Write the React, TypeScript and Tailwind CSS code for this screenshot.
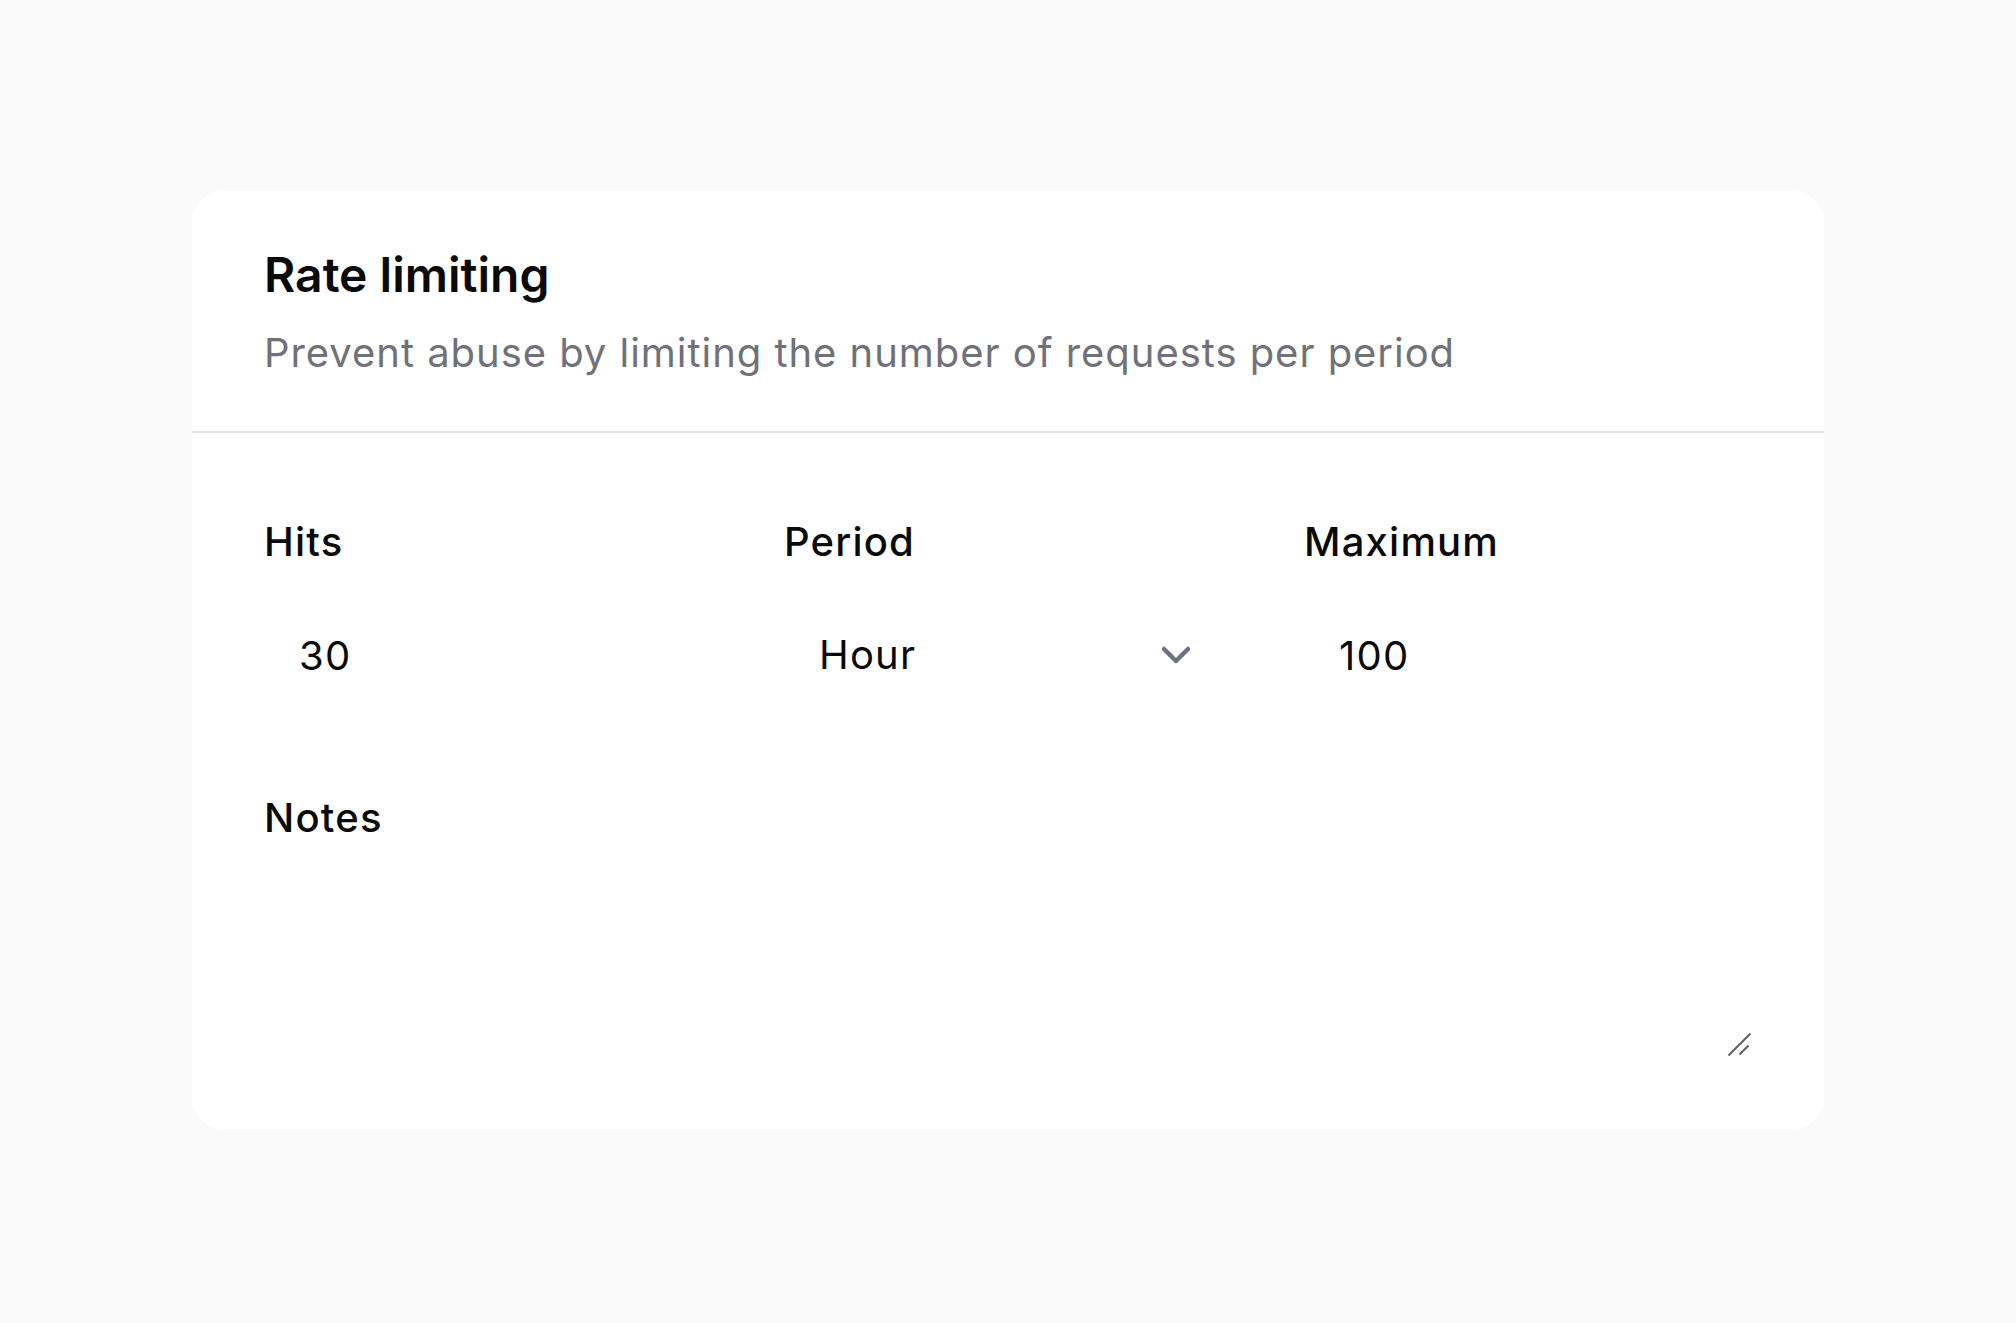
import React from 'react';

const fields = [
  { label: 'Hits', value: '30' },
  { label: 'Maximum', value: '100' },
];

const ChevronDown = () => (
  <svg width="60" height="60" viewBox="0 0 20 20" fill="none" aria-hidden="true">
    <path d="M6 8l4 4 4-4" stroke="#6b7280" strokeWidth="1.5" strokeLinecap="round" strokeLinejoin="round" />
  </svg>
);

// the textarea grip, drawn so it matches at this size
const ResizeGrip = () => (
  <svg width="24" height="24" viewBox="0 0 24 24" fill="none" aria-hidden="true">
    <path d="M0.5 22.5L22.5 0.5" stroke="#5f5f5f" strokeWidth="2" />
    <path d="M11.5 21.5L20.5 12.5" stroke="#5f5f5f" strokeWidth="2" />
  </svg>
);

const App = () => {
  return (
    <div className="min-h-screen w-full bg-[#fafafa] font-['Inter','Liberation_Sans',sans-serif] text-[#0a0a0a]">
      <div className="flex justify-center pt-[191px]">
        <div className="w-[1632px] rounded-[32px] bg-white">
          {/* Header */}
          <div className="border-b-2 border-[#e5e5e7] px-[72px] py-[48px]">
            <h2 className="text-[48px] font-semibold leading-[72px]">Rate limiting</h2>
            <p className="mt-3 text-[40px] leading-[60px] tracking-[0.024em] text-[#71717a]">
              Prevent abuse by limiting the number of requests per period
            </p>
          </div>

          {/* Body */}
          <div className="px-[72px] pt-[79px] pb-[72px]">
            <div className="grid grid-cols-3 gap-[72px]">
              <div>
                <label className="block text-[40px] font-medium leading-[60px] tracking-[0.03em]">{fields[0].label}</label>
                <input
                  defaultValue={fields[0].value}
                  className="mt-4 block h-[134px] w-full bg-transparent px-[35px] text-[40px] tracking-[0.03em] outline-none"
                />
              </div>
              <div>
                <label className="block text-[40px] font-medium leading-[60px] tracking-[0.03em]">Period</label>
                <div className="mt-4 flex h-[134px] w-full items-center justify-between pl-[35px] pr-[26px]">
                  <span className="text-[40px] leading-[60px] tracking-[0.03em]">Hour</span>
                  <ChevronDown />
                </div>
              </div>
              <div>
                <label className="block text-[40px] font-medium leading-[60px] tracking-[0.03em]">{fields[1].label}</label>
                <input
                  defaultValue={fields[1].value}
                  className="mt-4 block h-[134px] w-full bg-transparent px-[35px] text-[40px] tracking-[0.03em] outline-none"
                />
              </div>
            </div>

            <div className="mt-[66px]">
              <label className="block text-[40px] font-medium leading-[60px] tracking-[0.03em]">Notes</label>
              <div className="relative mt-4">
                <textarea className="block h-[193px] w-full resize-none bg-transparent px-[35px] py-4 text-[40px] outline-none" />
                <div className="pointer-events-none absolute right-0 bottom-0">
                  <ResizeGrip />
                </div>
              </div>
            </div>
          </div>
        </div>
      </div>
    </div>
  );
};

export default App;
